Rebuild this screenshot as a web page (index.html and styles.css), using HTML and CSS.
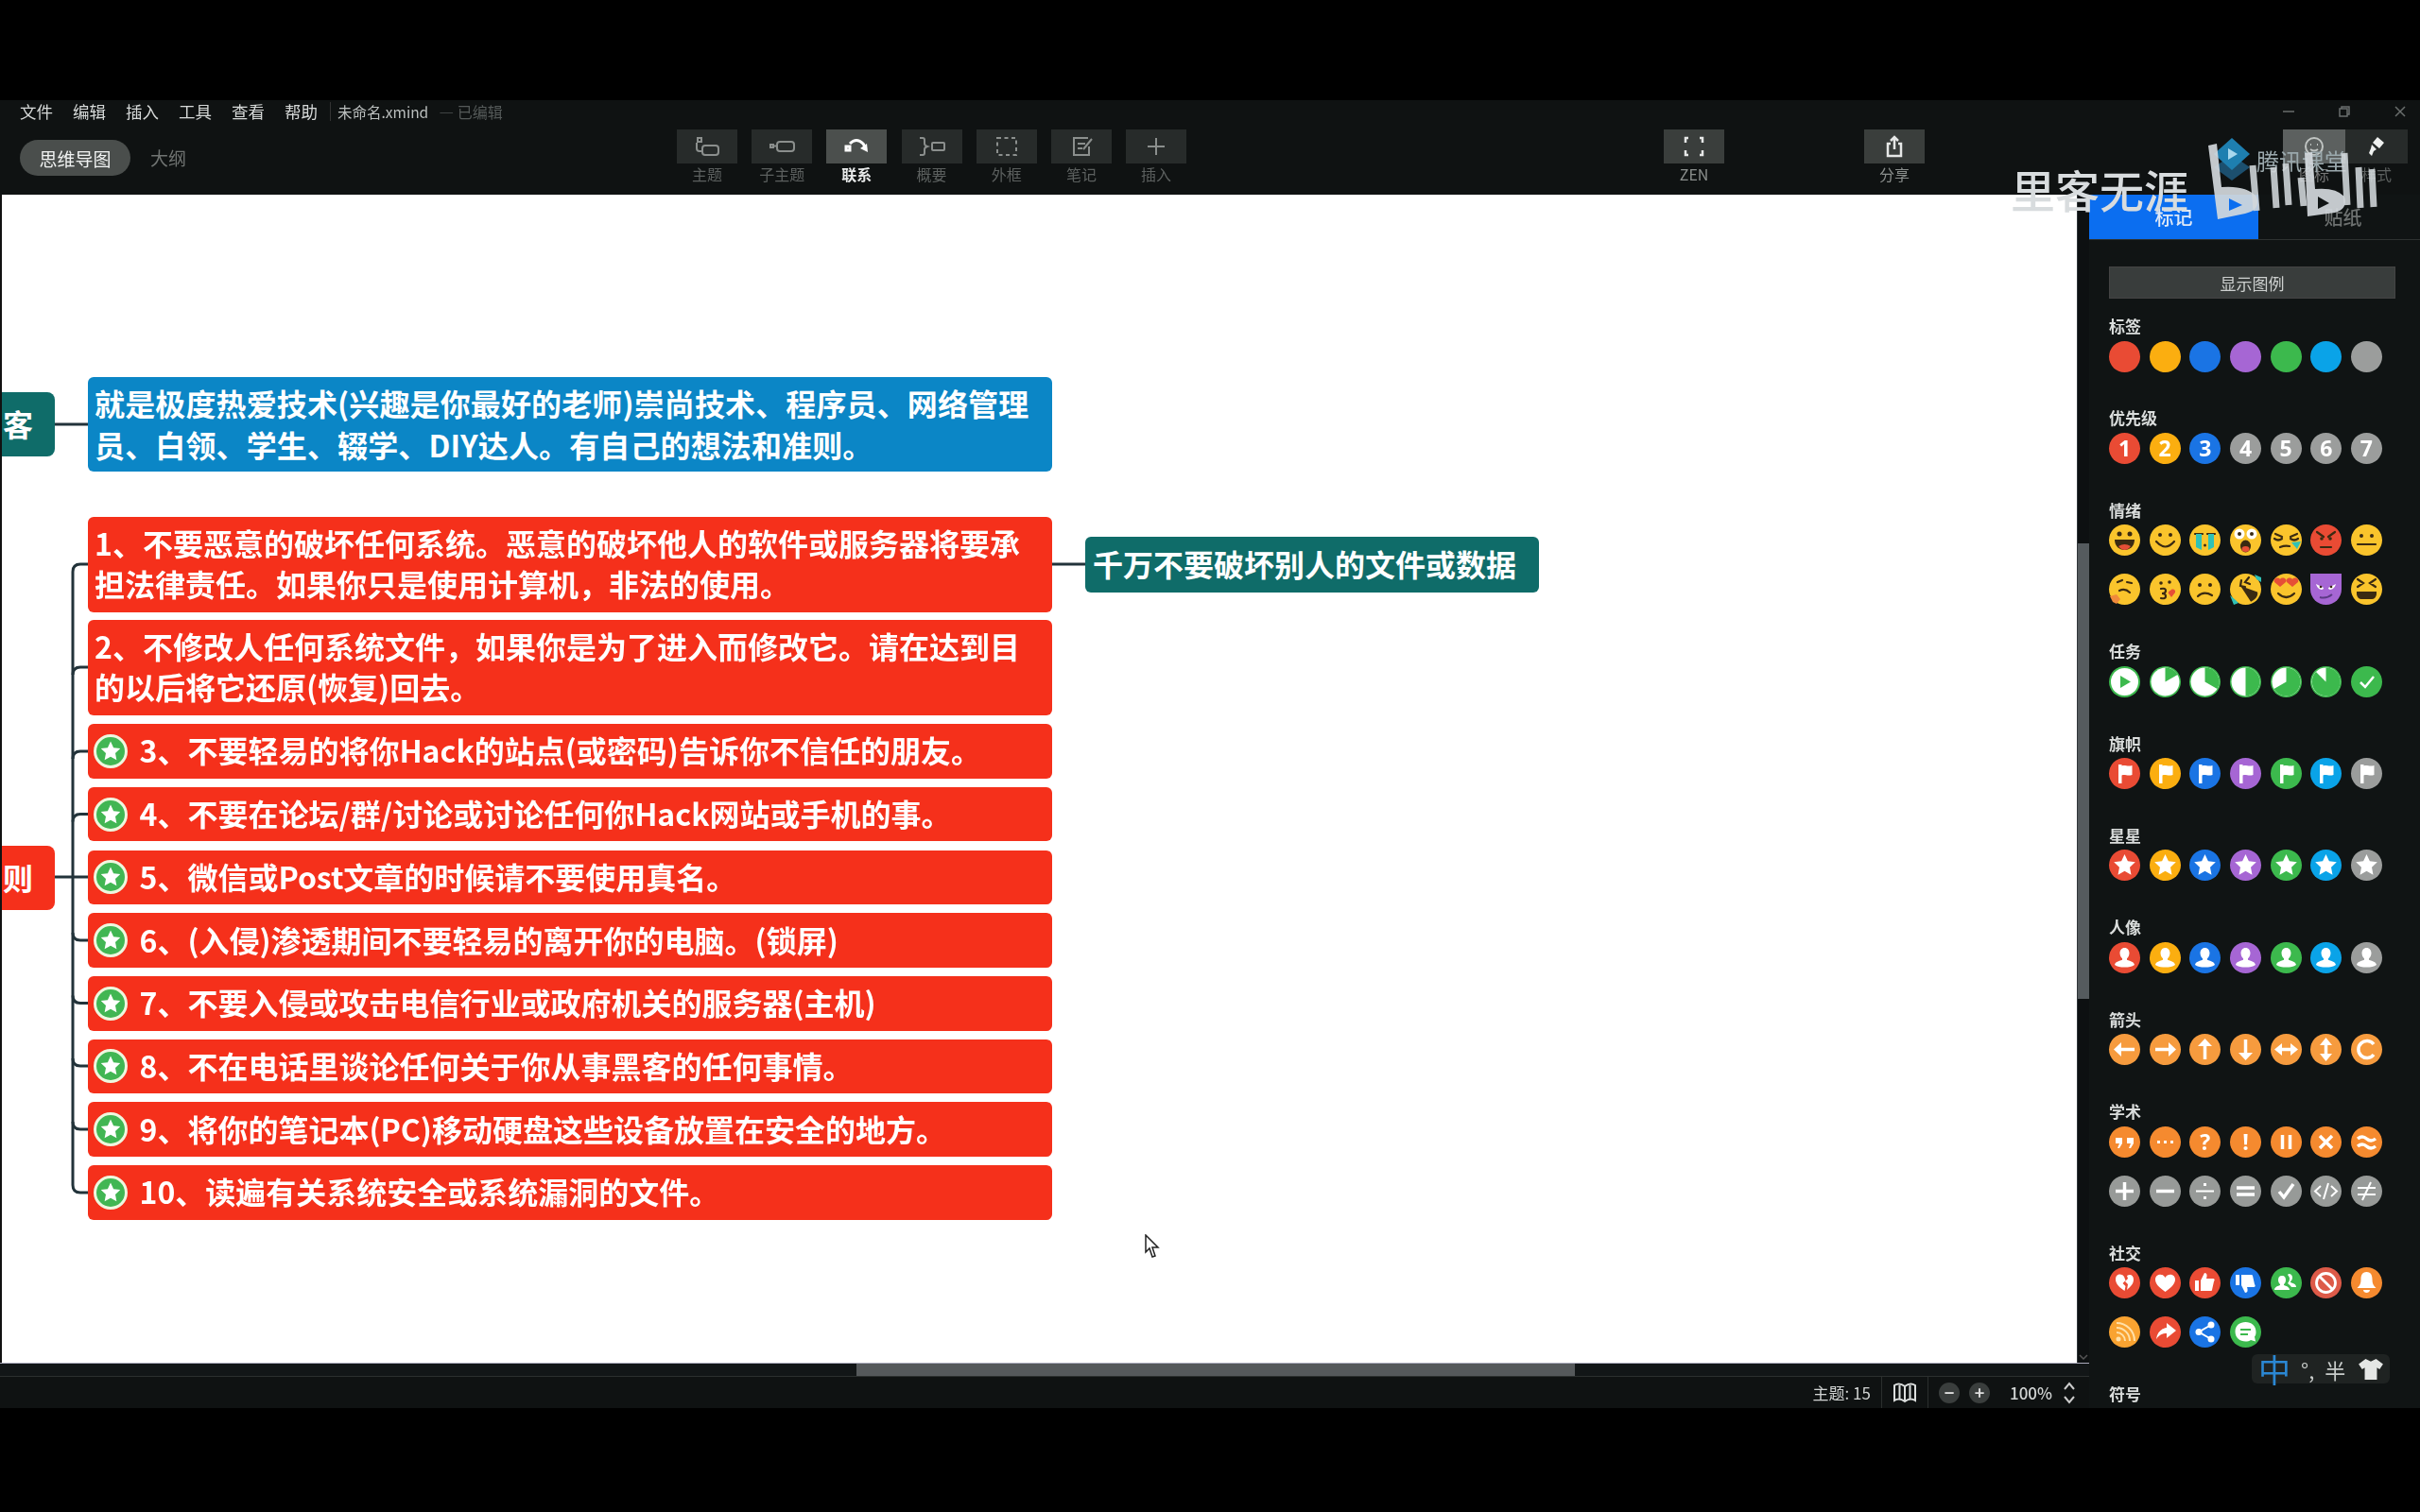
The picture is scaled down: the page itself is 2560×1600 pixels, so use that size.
FILE: index.html
```html
<!DOCTYPE html>
<html lang="zh-CN">
<head>
<meta charset="utf-8">
<title>未命名.xmind</title>
<link rel="stylesheet" href="styles.css">
</head>
<body>
<svg class="defs" aria-hidden="true">
  <symbol id="flag" viewBox="0 0 33 33"><path d="M10 7h3.5v20H10zM13.5 8.5c3 -1.5 6 1 11 -.5v10c-5 1.500 -8 -1 -11 .5z"/></symbol>
  <symbol id="star" viewBox="0 0 33 33"><path d="M16.500 5l3.400 7.300 7.900 1-5.800 5.500 1.500 7.900-7-3.900-7 3.900 1.500-7.900-5.800-5.500 7.900-1z"/></symbol>
  <symbol id="person" viewBox="0 0 33 33"><path d="M16.500 6c3.200 0 5 2.500 5 5.500 0 2.500-1.200 4.700-2.500 5.700v1.600c3 1.200 7.500 1.700 8 5.200-2.500 2-6 2.500-10.500 2.500s-8-.5-10.500-2.500c.5-3.500 5-4 8-5.200v-1.600c-1.300-1-2.500-3.200-2.500-5.700 0-3 1.800-5.500 5-5.500z"/></symbol>
</svg>

<div class="screen">
<div class="app">
  <header class="head">
    <div class="menu">
      <span>文件</span><span>编辑</span><span>插入</span><span>工具</span><span>查看</span><span>帮助</span>
      <i class="menu-sep"></i>
      <span class="file">未命名.xmind</span><span class="edited">— 已编辑</span>
      <div class="winctl">
        <svg viewBox="0 0 14 14"><path d="M1 7h12"/></svg>
        <svg viewBox="0 0 14 14"><path d="M2 4h8v8H2zM4 4V2h8v8h-2"/></svg>
        <svg viewBox="0 0 14 14"><path d="M2 2l10 10M12 2L2 12"/></svg>
      </div>
    </div>
    <div class="toolrow">
      <div class="views"><span class="pill">思维导图</span><span class="outline">大纲</span></div>
      <div class="tools">
        <div class="tool"><div class="tbtn"><svg viewBox="0 0 32 24"><path d="M6 3h4v4H6zM5 8v6q0 3 3 3h2"/><rect x="11" y="11" width="17" height="10" rx="3"/></svg></div><span>主题</span></div>
        <div class="tool"><div class="tbtn"><svg viewBox="0 0 32 24"><path d="M4 10h3v3H4zM8 11.500h3"/><rect x="11" y="7" width="18" height="10" rx="3"/></svg></div><span>子主题</span></div>
        <div class="tool on"><div class="tbtn"><svg viewBox="0 0 32 24"><path d="M5 12h4v4H5zM9 9q7-7 14 0l3 5"/><path class="fill" d="M20 14l8 4-1-9z"/></svg></div><span>联系</span></div>
        <div class="tool"><div class="tbtn"><svg viewBox="0 0 32 24"><path d="M3 3h3q2 0 2 2v4q0 2 3 3-3 1-3 3v4q0 2-2 2H3"/><rect x="16" y="8" width="13" height="8" rx="1"/></svg></div><span>概要</span></div>
        <div class="tool"><div class="tbtn"><svg viewBox="0 0 32 24"><path class="dash" d="M6 3h20v18H6z"/></svg></div><span>外框</span></div>
        <div class="tool"><div class="tbtn"><svg viewBox="0 0 32 24"><path d="M24 12v9H8V3h15M12 9h8M12 14h5M18 15l9-11"/></svg></div><span>笔记</span></div>
        <div class="tool"><div class="tbtn"><svg viewBox="0 0 32 24"><path d="M16 3v18M7 12h18"/></svg></div><span>插入</span></div>
      </div>
      <div class="tool zen"><div class="tbtn"><svg viewBox="0 0 32 24"><path d="M10 3H7v5M22 3h3v5M10 21H7v-5M22 21h3v-5"/></svg></div><span>ZEN</span></div>
      <div class="tool share"><div class="tbtn"><svg viewBox="0 0 32 24"><path d="M12 9H9v13h14V9h-3M16 15V2M12 6l4-4 4 4"/></svg></div><span>分享</span></div>
      <div class="tool side"><div class="tbtn lit"><svg viewBox="0 0 32 24"><circle cx="16" cy="12" r="9"/><path d="M12 10h1M19 10h1M12 15q4 3 8 0"/></svg></div><span>图标</span></div>
      <div class="tool side"><div class="tbtn"><svg viewBox="0 0 32 24"><path class="fill" d="M17 2l7 6-5 6-7-6zM11 10l5 5-3 2 -2 5-3-3 2-5z"/></svg></div><span>样式</span></div>
    </div>
  </header>

  <div class="body">
    <div class="work">
      <div class="work-main">
        <main class="canvas">
          <svg class="links" viewBox="0 0 2197 1236">
            <path d="M58 243H93M58 722H93M1113 391H1148"/>
            <path d="M93 391H85Q77 391 77 399V1048Q77 1056 85 1056H93"/>
            <path d="M93 500H85Q77 500 77 508M93 589H85Q77 589 77 597M93 655.500H85Q77 655.500 77 663.500"/>
            <path d="M93 789H85Q77 789 77 781M93 855.600H85Q77 855.600 77 847.600M93 922H85Q77 922 77 914M93 989H85Q77 989 77 981"/>
          </svg>
          <div class="node stub teal stub-a">客</div>
          <div class="node stub red-n stub-b">则</div>
          <div class="node blue-n intro">就是极度热爱技术(兴趣是你最好的老师)崇尚技术、程序员、网络管理<br>员、白领、学生、辍学、DIY达人。有自己的想法和准则。</div>
          <div class="rules">
            <div class="node red-n two">1、不要恶意的破坏任何系统。恶意的破坏他人的软件或服务器将要承<br>担法律责任。如果你只是使用计算机，非法的使用。</div>
            <div class="node red-n two">2、不修改人任何系统文件，如果你是为了进入而修改它。请在达到目<br>的以后将它还原(恢复)回去。</div>
            <div class="node red-n one"><svg class="badge" viewBox="0 0 36 36"><use href="#star"/></svg>3、不要轻易的将你Hack的站点(或密码)告诉你不信任的朋友。</div>
            <div class="node red-n one"><svg class="badge" viewBox="0 0 36 36"><use href="#star"/></svg>4、不要在论坛/群/讨论或讨论任何你Hack网站或手机的事。</div>
            <div class="node red-n one"><svg class="badge" viewBox="0 0 36 36"><use href="#star"/></svg>5、微信或Post文章的时候请不要使用真名。</div>
            <div class="node red-n one"><svg class="badge" viewBox="0 0 36 36"><use href="#star"/></svg>6、(入侵)渗透期间不要轻易的离开你的电脑。(锁屏)</div>
            <div class="node red-n one"><svg class="badge" viewBox="0 0 36 36"><use href="#star"/></svg>7、不要入侵或攻击电信行业或政府机关的服务器(主机)</div>
            <div class="node red-n one"><svg class="badge" viewBox="0 0 36 36"><use href="#star"/></svg>8、不在电话里谈论任何关于你从事黑客的任何事情。</div>
            <div class="node red-n one"><svg class="badge" viewBox="0 0 36 36"><use href="#star"/></svg>9、将你的笔记本(PC)移动硬盘这些设备放置在安全的地方。</div>
            <div class="node red-n one"><svg class="badge" viewBox="0 0 36 36"><use href="#star"/></svg>10、读遍有关系统安全或系统漏洞的文件。</div>
          </div>
          <div class="node teal side-note">千万不要破坏别人的文件或数据</div>
          <svg class="cursor" viewBox="0 0 18 30"><path d="M2 1l13 13-6 0 3 9-3 1-3-9-4 4z"/></svg>
        </main>
        <div class="vscroll"><div class="vthumb"></div><svg viewBox="0 0 12 8"><path d="M2 2l4 4 4-4"/></svg></div>
      </div>
      <div class="hscroll"><div class="hthumb"></div></div>
      <footer class="status">
        <span>主题: 15</span><i class="sep"></i>
        <svg class="book" viewBox="0 0 26 22"><path d="M2 3c3-2 7-2 11 1 4-3 8-3 11-1v16c-3-2-7-2-11 1-4-3-8-3-11-1zM13 4v16M7.500 3v15M18.500 3v15"/></svg>
        <i class="sep"></i>
        <span class="zbtn">−</span><span class="zbtn">+</span>
        <span class="zval">100%</span>
        <svg class="updown" viewBox="0 0 14 24"><path d="M2 8l5-6 5 6M2 16l5 6 5-6"/></svg>
      </footer>
    </div>

    <aside class="panel">
      <div class="tabs"><div class="tab active">标记</div><div class="tab">贴纸</div></div>
      <div class="legend">显示图例</div>

      <section><h4>标签</h4><div class="grid">
        <span class="mk red"></span><span class="mk ora"></span><span class="mk blu"></span><span class="mk pur"></span><span class="mk gre"></span><span class="mk cya"></span><span class="mk gry"></span>
      </div></section>

      <section><h4>优先级</h4><div class="grid">
        <span class="mk num red">1</span><span class="mk num ora">2</span><span class="mk num blu">3</span><span class="mk num gry">4</span><span class="mk num gry">5</span><span class="mk num gry">6</span><span class="mk num gry">7</span>
      </div></section>

      <section><h4>情绪</h4><div class="grid">
        <svg class="mk yel face" viewBox="0 0 33 33"><circle class="k" cx="11" cy="10" r="2.500"/><circle class="k" cx="22" cy="10" r="2.500"/><path class="k" d="M6 16h21c0 7-5 11-10.500 11S6 23 6 16z"/><path class="r" d="M10 23q6.500-4 13 0-3 4-6.500 4T10 23z"/></svg>
        <svg class="mk yel face" viewBox="0 0 33 33"><circle class="k" cx="11" cy="11" r="2"/><circle class="k" cx="22" cy="11" r="2"/><path class="l" d="M7 18q9.500 11 19 0"/></svg>
        <svg class="mk yel face" viewBox="0 0 33 33"><path class="l" d="M6 10h8M19 10h8"/><path class="t" d="M7 10h6v17l-6-3zM20 10h6v14l-6 3z"/><circle class="k" cx="16.500" cy="22" r="1.500"/></svg>
        <svg class="mk yel face" viewBox="0 0 33 33"><circle class="w" cx="10" cy="10" r="5.500"/><circle class="w" cx="23" cy="10" r="5.500"/><circle class="k" cx="10" cy="10" r="2"/><circle class="k" cx="23" cy="10" r="2"/><ellipse class="k" cx="16.500" cy="23" rx="5.500" ry="6.500"/><ellipse class="r" cx="16.500" cy="26" rx="4" ry="3"/></svg>
        <svg class="mk yel face" viewBox="0 0 33 33"><path class="l" d="M5 10l7 3M21 13l7-3M4 15q4 3 8 0M21 15q4 3 8 0M10 24q5-2 10-1"/><path class="t" d="M22 19l10-1-4 8z"/></svg>
        <svg class="mk red face" viewBox="0 0 33 33"><path class="l" d="M7 8l7 5M26 8l-7 5M11 24h11"/><circle class="k" cx="12" cy="15" r="1.800"/><circle class="k" cx="21" cy="15" r="1.800"/></svg>
        <svg class="mk yel face" viewBox="0 0 33 33"><circle class="k" cx="11" cy="12" r="2"/><circle class="k" cx="22" cy="12" r="2"/><path class="l" d="M7 21h19"/></svg>
        <svg class="mk yel face" viewBox="0 0 33 33"><path class="l" d="M9 9l5-2M19 9l5 1M11 18q6-3 11 2"/><path class="o" d="M1 24l7-2 4 5-4 5-4-2z"/></svg>
        <svg class="mk yel face" viewBox="0 0 33 33"><circle class="k" cx="12" cy="10" r="1.800"/><circle class="k" cx="21" cy="9" r="1.800"/><path class="l" d="M12 16q5-1 5 2t-4 3q4 0 4 3t-5 2"/><path class="r" d="M22 18c2-3 6-1 5 2l-4 5-3-4c-1-1 1-3 2-3z"/></svg>
        <svg class="mk yel face" viewBox="0 0 33 33"><circle class="k" cx="11" cy="12" r="2"/><circle class="k" cx="22" cy="12" r="2"/><path class="l" d="M9 24q6-6 15-1"/></svg>
        <svg class="mk yel face" viewBox="0 0 33 33"><path class="k" d="M9 15L25 27c6-6 4-11 3-12z" transform="rotate(20 16 20)"/><path class="l" d="M12 7l-1 6 5 1M20 4l-4 5 5 2"/><path class="t" d="M0 23l6 5 3 3-5 2zM26 1l7 3v5l-5-3z"/></svg>
        <svg class="mk yel face" viewBox="0 0 33 33"><path class="r" d="M10 14L4 9c-2-4 4-6 6-3 2-3 8-1 6 3zM23 14l-6-5c-2-4 4-6 6-3 2-3 8-1 6 3z"/><path class="l" d="M8 21q8.500 8 17 0"/></svg>
        <svg class="mk pur face devil" viewBox="0 0 33 33"><path class="p" d="M1 0q3 6 7 6h17q4 0 7-6 2 7-1 12H2Q-1 7 1 0z"/><path class="w" d="M6 11l8 4c0 3-6 3-8-4zM27 11l-8 4c0 3 6 3 8-4z"/><circle class="k" cx="11" cy="14" r="1.300"/><circle class="k" cx="22" cy="14" r="1.300"/><path class="dl" d="M10 25q7 2 13-3"/></svg>
        <svg class="mk yel face" viewBox="0 0 33 33"><path class="l" d="M7 6l6 4-6 4M26 6l-6 4 6 4"/><path class="k" d="M6 19h21v3q-1 5-5 5H11q-4 0-5-5z"/></svg>
      </div></section>

      <section><h4>任务</h4><div class="grid task">
        <svg class="mk gre face" viewBox="0 0 33 33"><circle class="w" cx="16.500" cy="16.500" r="14.500"/><path class="g" d="M12 10l11 6.500L12 23z"/></svg>
        <svg class="mk gre face" viewBox="0 0 33 33"><circle class="w" cx="16.500" cy="16.500" r="15"/><path class="g" d="M16.500 16.500V1.500A15 15 0 0 1 29.500 9z"/></svg>
        <svg class="mk gre face" viewBox="0 0 33 33"><circle class="w" cx="16.500" cy="16.500" r="15"/><path class="g" d="M16.500 16.500V1.500A15 15 0 0 1 29.500 24z"/></svg>
        <svg class="mk gre face" viewBox="0 0 33 33"><circle class="w" cx="16.500" cy="16.500" r="15"/><path class="g" d="M16.500 1.500A15 15 0 0 1 16.500 31.500z"/></svg>
        <svg class="mk gre face" viewBox="0 0 33 33"><circle class="w" cx="16.500" cy="16.500" r="15"/><path class="g" d="M16.500 16.500V1.500A15 15 0 1 1 3.500 24z"/></svg>
        <svg class="mk gre face" viewBox="0 0 33 33"><circle class="w" cx="16.500" cy="16.500" r="15"/><path class="g" d="M16.500 16.500V1.500L16.500 1.500A15 15 0 1 1 6 6z"/></svg>
        <svg class="mk gre face" viewBox="0 0 33 33"><path class="wl" d="M10 17l5 5 9-11"/></svg>
      </div></section>

      <section><h4>旗帜</h4><div class="grid">
        <svg class="mk red ic"><use href="#flag"/></svg><svg class="mk ora ic"><use href="#flag"/></svg><svg class="mk blu ic"><use href="#flag"/></svg><svg class="mk pur ic"><use href="#flag"/></svg><svg class="mk gre ic"><use href="#flag"/></svg><svg class="mk cya ic"><use href="#flag"/></svg><svg class="mk gry ic"><use href="#flag"/></svg>
      </div></section>

      <section><h4>星星</h4><div class="grid">
        <svg class="mk red ic"><use href="#star"/></svg><svg class="mk ora ic"><use href="#star"/></svg><svg class="mk blu ic"><use href="#star"/></svg><svg class="mk pur ic"><use href="#star"/></svg><svg class="mk gre ic"><use href="#star"/></svg><svg class="mk cya ic"><use href="#star"/></svg><svg class="mk gry ic"><use href="#star"/></svg>
      </div></section>

      <section><h4>人像</h4><div class="grid">
        <svg class="mk red ic"><use href="#person"/></svg><svg class="mk ora ic"><use href="#person"/></svg><svg class="mk blu ic"><use href="#person"/></svg><svg class="mk pur ic"><use href="#person"/></svg><svg class="mk gre ic"><use href="#person"/></svg><svg class="mk cya ic"><use href="#person"/></svg><svg class="mk gry ic"><use href="#person"/></svg>
      </div></section>

      <section><h4>箭头</h4><div class="grid">
        <svg class="mk arr glyph" viewBox="0 0 33 33"><path d="M27 16.500H10"/><path class="f" d="M13 9l-8 7.500 8 7.500z"/></svg>
        <svg class="mk arr glyph" viewBox="0 0 33 33"><path d="M6 16.500h17"/><path class="f" d="M20 9l8 7.500-8 7.500z"/></svg>
        <svg class="mk arr glyph" viewBox="0 0 33 33"><path d="M16.500 27V10"/><path class="f" d="M9 13l7.500-8 7.500 8z"/></svg>
        <svg class="mk arr glyph" viewBox="0 0 33 33"><path d="M16.500 6v17"/><path class="f" d="M9 20l7.500 8 7.500-8z"/></svg>
        <svg class="mk arr glyph" viewBox="0 0 33 33"><path d="M10 16.500h13"/><path class="f" d="M12 10l-8 6.500 8 6.500zM21 10l8 6.500-8 6.500z"/></svg>
        <svg class="mk arr glyph" viewBox="0 0 33 33"><path d="M10 16.500h13" transform="rotate(90 16.500 16.500)"/><path class="f" d="M10 12l6.500-8 6.500 8zM10 21l6.500 8 6.500-8z"/></svg>
        <svg class="mk arr glyph" viewBox="0 0 33 33"><path d="M24 11a9 9 0 1 0 0 11"/></svg>
      </div></section>

      <section><h4>学术</h4><div class="grid">
        <svg class="mk aca glyph" viewBox="0 0 33 33"><path class="f" d="M7 12h7v6l-3 5H9l2-5H7zM19 12h7v6l-3 5h-2l2-5h-4z"/></svg>
        <svg class="mk aca glyph" viewBox="0 0 33 33"><path class="f" d="M8 15h3v3H8zM15 15h3v3h-3zM22 15h3v3h-3z"/></svg>
        <span class="mk num aca">?</span>
        <span class="mk num aca">!</span>
        <svg class="mk aca glyph" viewBox="0 0 33 33"><path d="M12.500 9v15M20.500 9v15"/></svg>
        <svg class="mk aca glyph" viewBox="0 0 33 33"><path d="M10 10l13 13M23 10L10 23"/></svg>
        <svg class="mk aca glyph" viewBox="0 0 33 33"><path d="M7 13q5-4 9.500 0t9.500 0M7 21q5-4 9.500 0t9.500 0"/></svg>
        <svg class="mk gr2 glyph" viewBox="0 0 33 33"><path d="M16.500 7v19M7 16.500h19"/></svg>
        <svg class="mk gr2 glyph" viewBox="0 0 33 33"><path d="M7 16.500h19"/></svg>
        <svg class="mk gr2 glyph" viewBox="0 0 33 33"><path class="thin" d="M7 16.500h19"/><path class="f" d="M15 8h3v3h-3zM15 22h3v3h-3z"/></svg>
        <svg class="mk gr2 glyph" viewBox="0 0 33 33"><path d="M7 13h19M7 20h19"/></svg>
        <svg class="mk gr2 glyph" viewBox="0 0 33 33"><path d="M9 17l5 6L24 9"/></svg>
        <svg class="mk gr2 glyph" viewBox="0 0 33 33"><path class="thin" d="M11 11l-6 5.500 6 5.500M22 11l6 5.500-6 5.500M19 8l-5 17"/></svg>
        <svg class="mk gr2 glyph" viewBox="0 0 33 33"><path class="thin" d="M7 13h19M7 20h19M21 7L12 26"/></svg>
      </div></section>

      <section><h4>社交</h4><div class="grid">
        <svg class="mk red ic" viewBox="0 0 33 33"><path d="M16 10c-3-4-9-3-9 3 0 5 5 9 9.500 12l1-5-3-3 3-3z M19 9c3-2 7-1 7 4 0 5-4 8-7 11l1-6-3-3 3-3z"/></svg>
        <svg class="mk red ic" viewBox="0 0 33 33"><path d="M16.500 26C11 22 6 18 6 13c0-6 8-7 10.500-2C19 6 27 7 27 13c0 5-5 9-10.500 13z"/></svg>
        <svg class="mk red ic" viewBox="0 0 33 33"><path d="M6 14h4v11H6zM12 14l4-8c3 0 3 3 2 6h7c2 0 2 2 1 3l-2 9c0 1-1 1-2 1H12z"/></svg>
        <svg class="mk blu ic" viewBox="0 0 33 33"><path d="M6 8h4v11H6zM12 19l4 8c3 0 3-3 2-6h7c2 0 2-2 1-3l-2-9c0-1-1-1-2-1H12z"/></svg>
        <svg class="mk gre ic" viewBox="0 0 33 33"><path d="M12 9c3 0 4 2 4 4.500 0 2-1 3.500-2 4.500v1c2 1 6 1.500 6 5H4c0-3.500 4-4 6-5v-1c-1-1-2-2.500-2-4.500C8 11 9 9 12 9zM19 7c3 0 4 2 4 4 0 2-1 3-2 4v1c2 1 6 1 6 5h-5c-1-2-3-3-4-4 1-1 2-3 2-5 0-1-1-3-2-4z"/></svg>
        <svg class="mk ban glyph" viewBox="0 0 33 33"><circle class="wl" cx="16.500" cy="16.500" r="10"/><path class="wl" d="M10 10l13 13"/></svg>
        <svg class="mk aca ic" viewBox="0 0 33 33"><path d="M16.500 5c5 0 6 4 6 8 0 4 1 6 4 9H6.500c3-3 4-5 4-9 0-4 1-8 6-8zM13 24h7c0 2-2 3-3.500 3S13 26 13 24z"/></svg>
        <svg class="mk rss glyph" viewBox="0 0 33 33"><path class="thin dim" d="M8 17a9 9 0 0 1 9 9M8 12a14 14 0 0 1 14 14M8 7a19 19 0 0 1 19 19"/><circle class="f dim" cx="10" cy="24" r="2.500"/></svg>
        <svg class="mk red ic" viewBox="0 0 33 33"><path d="M18 7l10 8-10 8v-5c-5 0-8 2-11 6 1-7 5-11 11-12z"/></svg>
        <svg class="mk blu glyph" viewBox="0 0 33 33"><path class="thin" d="M23 9L10 16.500 23 24"/><circle class="f" cx="23" cy="9" r="3.500"/><circle class="f" cx="10" cy="16.500" r="3.500"/><circle class="f" cx="23" cy="24" r="3.500"/></svg>
        <svg class="mk gre ic" viewBox="0 0 33 33"><path d="M16.500 6c6 0 11 4 11 10.500 0 2-.5 4-1.500 5l1 5-5-1.500c-1.500 1-3.500 1.500-5.500 1.500-6 0-11-4-11-10.500S10.500 6 16.500 6zM11 13v2h11v-2zM11 18v2h8v-2z" fill-rule="evenodd"/></svg>
      </div></section>

      <section><h4>符号</h4></section>
      <i class="pscroll"></i>
    </aside>
  </div>
</div>
</div>

<div class="wm-tencent"><svg viewBox="0 0 40 46"><path class="tc2" d="M20 18l19 13-19 14L1 31z"/><path class="tc1" d="M20 0l19 17-19 17L1 17z"/><path class="tc3" d="M16 11l10 6-10 6z"/></svg><span>腾讯课堂</span></div>
<div class="wm-name">里客无涯</div>
<svg class="wm-bili" viewBox="0 0 190 85">
  <path fill-rule="evenodd" d="M6 4l9-2 5 46q26-2 37 10 5 14-12 18L16 82zM28 60v13l14-6z"/>
  <path class="bar" d="M53 25l4 48M75 27l3 43M88 23l3 44M104 38l3 30"/>
  <path fill-rule="evenodd" d="M108 12l8-1 3 39q22-2 31 8 4 13-10 17l-29 4zM122 58v13l12-6z"/>
  <path class="bar" d="M150 12l3 55M165 27l2 43M179 29l2 40"/>
</svg>
<div class="ime"><b>中</b><span class="ime-dot">°,</span><span>半</span><svg viewBox="0 0 30 26"><path d="M9 1l6 3 6-3 8 6-4 6-3-2v14H8V11l-3 2-4-6z"/></svg></div>
</body>
</html>
```

FILE: styles.css
```css
* { box-sizing: border-box; }
html, body { margin: 0; height: 100%; background: #000; }
body {
  font-family: "Noto Sans CJK SC", "Noto Sans", sans-serif;
  overflow: hidden;
  position: relative;
}
.defs { display: block; width: 0; height: 0; overflow: hidden; }
.screen { height: 1600px; padding: 106px 0 110px; display: flex; filter: blur(.55px); }
.app { flex: 1; display: flex; flex-direction: column; background: #0f1212; }

/* header */
.head { height: 100px; flex: none; display: flex; flex-direction: column; }
.menu { height: 28px; display: flex; align-items: center; padding: 0 0 5px 21px; gap: 21px; font-size: 17.500px; color: #d5d8d7; }
.menu-sep { width: 1px; height: 20px; background: #333; margin: 0 -14px 0 -8px; }
.file { color: #bbbfbe; margin-right: -11px; font-size: 15.500px; }
.edited { color: #555a59; font-size: 16px; margin-left: 1px; }
.winctl { margin-left: auto; display: flex; gap: 45px; padding-right: 22px; }
.winctl svg { width: 14px; height: 14px; fill: none; stroke: #6a6e6d; stroke-width: 1.500; }
.toolrow { height: 72px; display: flex; padding-top: 3px; }
.views { width: 716px; flex: none; padding: 11px 0 0 21px; display: flex; gap: 21px; align-items: flex-start; font-size: 19px; }
.pill { width: 117px; height: 38px; border-radius: 19px; background: #4a4e4c; color: #f0f2f1; display: flex; align-items: center; justify-content: center; }
.outline { color: #6f7371; line-height: 38px; }
.tools { display: flex; gap: 15.200px; }
.tool { width: 64px; display: flex; flex-direction: column; align-items: center; color: #5c605f; font-size: 16px; line-height: 24px; }
.tool > span { margin-top: -1px; }
.tbtn { width: 100%; height: 36px; flex: none; background: #272b2a; display: flex; align-items: center; justify-content: center; }
.tbtn svg { width: 32px; height: 24px; fill: none; stroke: #8b8f8d; stroke-width: 2; }
.tbtn svg .fill { fill: #8b8f8d; stroke: none; }
.tbtn svg .dash { stroke-dasharray: 4 3.500; }
.on { color: #e8eaea; font-weight: 700; }
.on .tbtn { background: #4b4f4d; }
.on .tbtn svg { stroke: #fff; stroke-width: 3; }
.on .tbtn svg .fill { fill: #fff; }
.zen { margin-left: 505px; color: #8a8e8c; }
.zen .tbtn, .share .tbtn { background: #3a3e3c; }
.zen .tbtn svg, .share .tbtn svg { stroke: #e6e8e7; stroke-width: 2.500; }
.share { margin-left: 148px; color: #8a8e8c; }
.side { width: 66px; }
.share + .side { margin-left: 379px; }
.lit { background: #5c605f; }
.lit + span { color: #777; }
.side .tbtn svg { stroke: #c0c4c2; }
.side .tbtn svg .fill { fill: #eef0ef; }

/* body */
.body { flex: 1; display: flex; min-height: 0; }
.work { width: 2210px; flex: none; display: flex; flex-direction: column; }
.work-main { flex: 1; display: flex; min-height: 0; }
.canvas { flex: 1; background: #fff; position: relative; overflow: hidden; }
.canvas::before { content: ""; position: absolute; left: 0; top: 0; bottom: 0; width: 2px; background: #111; z-index: 1; }
.links { position: absolute; inset: 0; width: 100%; height: 100%; fill: none; stroke: #22333a; stroke-width: 3; }
.node { color: #fff; font-weight: 700; font-size: 32px; line-height: 44px; border-radius: 6px; white-space: nowrap; }
.stub { position: absolute; left: 0; top: 209px; width: 58px; height: 68px; border-radius: 0 8px 8px 0; display: flex; align-items: center; padding: 0 0 3px 3px; }
.stub-b { top: 689px; }
.teal { background: #0f6c69; }
.red-n { background: #f5301b; }
.blue-n { background: #0b86c6; }
.intro { position: absolute; left: 93px; top: 193px; width: 1020px; height: 100px; padding: 5px 7px; line-height: 44px; letter-spacing: .13px; }
.rules { position: absolute; left: 93px; top: 341px; width: 1020px; display: flex; flex-direction: column; gap: 9.100px; }
.two { height: 101px; padding: 5.500px 7px; line-height: 43px; }
.two + .two { margin-top: -1px; }
.one { height: 57.600px; display: flex; align-items: center; padding: 0 0 3px 6px; }
.badge { width: 36px; height: 36px; margin: 3px 12.500px 0 0; flex: none; border-radius: 50%; background: #41b653; border: 3px solid #eef7df; fill: #fff; }
.side-note { position: absolute; left: 1148px; top: 362px; width: 480px; height: 59px; line-height: 57px; padding-left: 8px; }
.cursor { position: absolute; left: 1210px; top: 1100px; width: 18px; height: 30px; fill: #fff; stroke: #222; stroke-width: 1.500; }
.vscroll { width: 13px; flex: none; background: #0d1011; border-left: 1px solid #30363a; display: flex; flex-direction: column; padding-top: 369px; position: relative; }
.vthumb { height: 482px; background: #555b5e; }
.vscroll svg { position: absolute; left: 0; bottom: 2px; width: 12px; height: 8px; fill: none; stroke: #555; stroke-width: 1.500; }
.hscroll { height: 14px; flex: none; background: #121617; padding-left: 906px; border-top: 1px solid #aab; }
.hthumb { width: 760px; height: 100%; background: #55595b; }
.status { height: 34px; flex: none; display: flex; align-items: center; justify-content: flex-end; gap: 11px; padding-right: 14px; color: #d0d3d2; font-size: 17px; border-top: 1px solid #2b2f2e; }
.sep { width: 1px; height: 100%; background: #2b2f2e; }
.book { width: 26px; height: 22px; fill: none; stroke: #dcdfde; stroke-width: 2; }
.zbtn { width: 22px; height: 22px; border-radius: 50%; background: #3a3e3d; color: #ddd; font-weight: 700; line-height: 21px; text-align: center; font-size: 18px; }
.zbtn + .zbtn { margin-left: -1px; }
.zval { margin-left: 10px; font-weight: 500; }
.updown { width: 14px; height: 24px; fill: none; stroke: #ccc; stroke-width: 2; }

/* panel */
.panel { flex: 1; position: relative; overflow: hidden; padding-left: 21px; background: #101414; }
.tabs { height: 48px; margin-left: -21px; display: flex; border-bottom: 1px solid #2e3231; font-size: 20px; color: #6d7170; font-weight: 500; }
.tab { width: 179px; display: flex; align-items: center; justify-content: center; }
.tab.active { background: #0b6ef0; color: #dfe9f7; }
.legend { width: 303px; height: 34px; margin: 28px 0 19px 0; background: #393d3c; border: 1px solid #444; color: #cdd0cf; font-size: 17px; display: flex; align-items: center; justify-content: center; }
section { margin-bottom: 38.900px; }
h4 { margin: 0 0 5.500px; font-size: 17px; line-height: 20px; font-weight: 700; color: #dadddc; }
.grid { display: grid; grid-template-columns: repeat(7, 33px); column-gap: 9.670px; row-gap: 19px; }
.mk { width: 33px; height: 33px; border-radius: 50%; display: block; }
.ic { fill: #fff; }
.num { display: flex; align-items: center; justify-content: center; color: #fff; font-weight: 700; font-size: 23px; line-height: 1; font-family: "Open Sans", sans-serif; }
.red { background: #e94b34; }
.ora { background: #fbae10; }
.blu { background: #1a74e4; }
.pur { background: #a666d4; }
.gre { background: #3cb94d; }
.cya { background: #0aa3e8; }
.gry { background: #9b9d9c; }
.yel { background: #fac42c; }
.arr { background: #f69b3e; }
.aca { background: #f58a2f; }
.gr2 { background: #979a98; }
.rss { background: #f9a331; }
.ban { background: #dd5a48; }
.face { overflow: visible; }
.face .k { fill: #3a2a12; }
.face .r { fill: #e64f36; }
.face .w { fill: #fff; }
.face .t { fill: #2fc1b6; }
.face .o { fill: #f08a3c; }
.face .p { fill: #a666d4; }
.face .g { fill: #3cb94d; }
.face .l { fill: none; stroke: #3a2a12; stroke-width: 2.200; stroke-linecap: round; }
.face .dl { fill: none; stroke: #5b3a84; stroke-width: 2; }
.face .wl { fill: none; stroke: #fff; stroke-width: 2.500; }
.devil { border-radius: 0 0 50% 50%; }
.ban .wl { fill: none; stroke: #fff; stroke-width: 2.800; }
.glyph { fill: none; stroke: #fff; stroke-width: 3.500; }
.glyph .f { fill: #fff; stroke: none; }
.glyph .thin { stroke-width: 2; }
.glyph .dim { stroke: #ffe0a8; }
.glyph .f.dim { fill: #ffe0a8; stroke: none; }
.pscroll { position: absolute; right: 3px; top: 48px; width: 2px; height: 911px; background: #2a2e2e; }

/* overlays */
.wm-tencent { position: absolute; left: 2341px; top: 146px; display: flex; gap: 6px; align-items: center; color: #9aa8ac; font-size: 24px; }
.wm-tencent svg { width: 40px; height: 46px; }
.tc1 { fill: #1e7fb0; }
.tc2 { fill: #1c4f6e; }
.tc3 { fill: #a8d8ee; }
.wm-name { position: absolute; left: 2127px; top: 168px; font-size: 47px; line-height: 64px; color: #d8dcde; font-weight: 500; white-space: nowrap; }
.wm-bili { position: absolute; left: 2330px; top: 150px; width: 190px; height: 85px; fill: #d3d8dc; fill-opacity: .92; }
.wm-bili .bar { fill: none; stroke: #d3d8dc; stroke-width: 7; stroke-opacity: .88; }
.ime { position: absolute; left: 2382px; top: 1433px; width: 146px; height: 31px; background: #1f2322; border-radius: 6px; display: flex; align-items: center; padding-left: 7px; gap: 11px; color: #c8ccca; font-size: 22px; }
.ime b { color: #2b88d4; font-size: 34px; font-weight: 400; line-height: 31px; }
.ime svg { width: 28px; height: 24px; fill: #e4e6e5; margin-left: 2px; }
```
